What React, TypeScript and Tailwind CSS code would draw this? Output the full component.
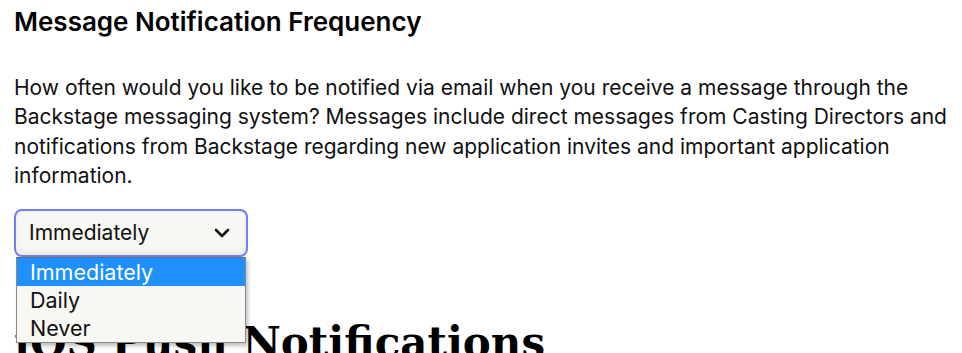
import React from "react";

const options = ["Immediately", "Daily", "Never"];

const Chevron = () => (
  <svg width="16" height="10" viewBox="0 0 16 10" fill="none">
    <polyline points="2,2 8,8 14,2" stroke="#111" strokeWidth="2.6" strokeLinecap="round" strokeLinejoin="round" />
  </svg>
);

export default function App() {
  return (
    <div className="w-[962px] h-[353px] overflow-hidden bg-white px-[14px] font-['Inter',sans-serif] text-[#111]">
      <h2 className="pt-[6px] text-[26px] leading-[32px] font-semibold text-black">Message Notification Frequency</h2>

      <p className="mt-[35px] w-[940px] text-[21px] leading-[29.3px]">
        How often would you like to be notified via email when you receive a message through the Backstage messaging
        system? Messages include direct messages from Casting Directors and notifications from Backstage regarding new
        application invites and important application information.
      </p>

      <div className="relative mt-[19px] w-[234px]">
        <div className="flex h-[48px] items-center justify-between rounded-[8px] border-2 border-[#717ef5] bg-[#f7f7f3] pl-[13px] pr-[16px] shadow-[inset_0_-4px_6px_rgba(0,0,0,0.06)]">
          <span className="text-[21px]">Immediately</span>
          <Chevron />
        </div>

        <div className="absolute left-[2px] top-[48px] z-10 w-[230px] border border-[#8a8a8a] border-t-[#6b6b6b] bg-[#f7f7f3] shadow-[2px_3px_4px_rgba(0,0,0,0.25)]">
          {options.map((o, i) => (
            <div
              key={o}
              className={
                i === 0
                  ? "h-[28px] bg-[#1e90ff] pl-[13px] text-[21.5px] leading-[28px] text-white"
                  : "h-[28px] pl-[13px] text-[21.5px] leading-[28px] text-[#111]"
              }
            >
              {o}
            </div>
          ))}
        </div>
      </div>

      <h1 className="mt-[60px] whitespace-nowrap font-['DejaVu_Serif',serif] text-[42px] leading-[52px] font-bold text-black">
        iOS Push Notifications
      </h1>
    </div>
  );
}
